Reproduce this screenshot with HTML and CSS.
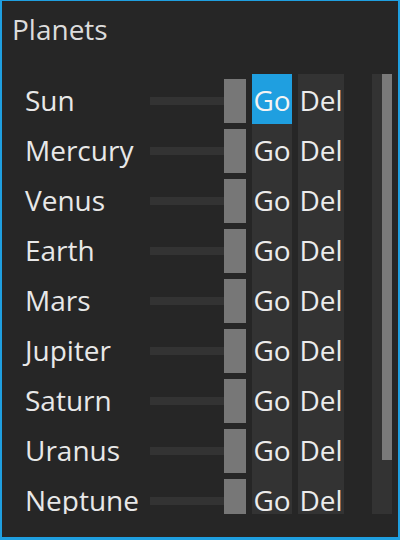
FILE: index.html
```html
<!DOCTYPE html>
<html>
<head>
<meta charset="utf-8">
<link rel="stylesheet" href="styles.css">
</head>
<body>
<div class="window">
  <div class="title">Planets</div>
  <div class="scroll">
    <div class="list">
      <div class="row"><span class="name">Sun</span><div class="slider"><div class="track"></div><div class="handle"></div></div><button class="btn go active">Go</button><button class="btn del">Del</button></div>
      <div class="row"><span class="name">Mercury</span><div class="slider"><div class="track"></div><div class="handle"></div></div><button class="btn go">Go</button><button class="btn del">Del</button></div>
      <div class="row"><span class="name">Venus</span><div class="slider"><div class="track"></div><div class="handle"></div></div><button class="btn go">Go</button><button class="btn del">Del</button></div>
      <div class="row"><span class="name">Earth</span><div class="slider"><div class="track"></div><div class="handle"></div></div><button class="btn go">Go</button><button class="btn del">Del</button></div>
      <div class="row"><span class="name">Mars</span><div class="slider"><div class="track"></div><div class="handle"></div></div><button class="btn go">Go</button><button class="btn del">Del</button></div>
      <div class="row"><span class="name">Jupiter</span><div class="slider"><div class="track"></div><div class="handle"></div></div><button class="btn go">Go</button><button class="btn del">Del</button></div>
      <div class="row"><span class="name">Saturn</span><div class="slider"><div class="track"></div><div class="handle"></div></div><button class="btn go">Go</button><button class="btn del">Del</button></div>
      <div class="row"><span class="name">Uranus</span><div class="slider"><div class="track"></div><div class="handle"></div></div><button class="btn go">Go</button><button class="btn del">Del</button></div>
      <div class="row"><span class="name">Neptune</span><div class="slider"><div class="track"></div><div class="handle"></div></div><button class="btn go">Go</button><button class="btn del">Del</button></div>
    </div>
    <div class="scrollbar"><div class="thumb"></div></div>
  </div>
</div>
</body>
</html>
```
FILE: styles.css
```css
html, body {
  margin: 0;
  padding: 0;
  background: #262626;
}
.window {
  box-sizing: border-box;
  width: 400px;
  height: 540px;
  border-style: solid;
  border-color: #1f9fe0;
  border-width: 1px 2px 3px 2px;
  background: #262626;
  font-family: "Open Sans", "Noto Sans", sans-serif;
  font-size: 28px;
  color: #e6e6e6;
  overflow: hidden;
}
.title {
  height: 38px;
  line-height: 38px;
  margin-top: 9px;
  padding-left: 10px;
  color: #dcdcdc;
}
.scroll {
  display: flex;
  margin-top: 26px;
  height: 440px;
}
.list {
  width: 342px;
  height: 440px;
  overflow: hidden;
  padding-left: 23px;
  box-sizing: border-box;
}
.row {
  display: flex;
  align-items: center;
  height: 50px;
}
.name {
  width: 125px;
  box-sizing: border-box;
  height: 50px;
  padding-top: 2px;
  line-height: 48px;
  white-space: nowrap;
  color: #e8e8e8;
}
.slider {
  position: relative;
  width: 96px;
  height: 44px;
  display: flex;
  align-items: center;
  margin-top: 4px;
}
.track {
  width: 96px;
  height: 8px;
  background: #333333;
}
.handle {
  position: absolute;
  right: 0;
  top: 0;
  width: 22px;
  height: 44px;
  background: #777777;
}
.btn {
  box-sizing: border-box;
  border: 0;
  margin: 0 0 0 6px;
  padding: 2px 0 0 0;
  height: 50px;
  line-height: 48px;
  font: inherit;
  color: #ececec;
  background: #333333;
  text-align: center;
}
.go { width: 40px; }
.del { width: 46px; }
.go.active {
  background: #1f9fe0;
  color: #f4f4f4;
}
.scrollbar {
  margin-left: 28px;
  width: 20px;
  height: 440px;
  background: #333333;
  display: flex;
  justify-content: flex-end;
}
.thumb {
  width: 10px;
  height: 386px;
  background: #7a7a7a;
}
```
